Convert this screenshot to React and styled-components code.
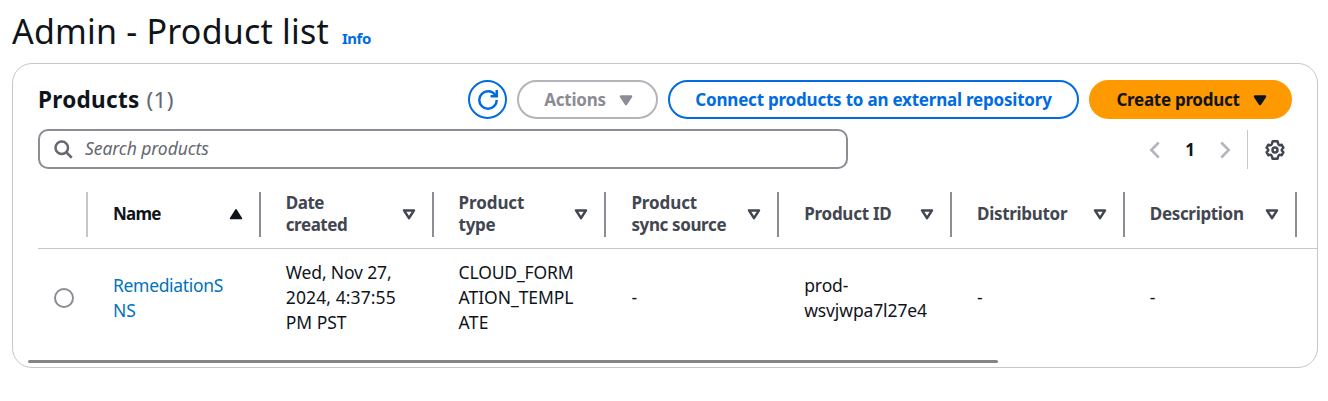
import React from "react";
import styled, { createGlobalStyle } from "styled-components";

const Global = createGlobalStyle`
  *, *::before, *::after { box-sizing: border-box; }
  body {
    margin: 0;
    background: #fff;
    color: #0f141a;
    font-family: "Noto Sans", "Open Sans", sans-serif;
    font-size: 17.5px;
    line-height: 25px;
  }
`;

const Text = styled.span`
  letter-spacing: ${(p) => p.$track || 0}px;
  white-space: nowrap;
`;

const Page = styled.main`
  width: 1328px;
  height: 401px;
  padding: 9px 10px 0 12px;
  overflow: hidden;
`;

const PageHeader = styled.header`
  display: flex;
  align-items: baseline;
  gap: 13px;
  height: 54px;
`;

const PageTitle = styled.h1`
  margin: 0;
  font-size: 34px;
  font-weight: 400;
  line-height: 44px;
`;

const InfoLink = styled.a`
  color: #006ce0;
  font-size: 15px;
  font-weight: 700;
  line-height: 20px;
`;

const Card = styled.section`
  display: flex;
  flex-direction: column;
  height: 305px;
  border: 1px solid #c6c6cd;
  border-radius: 20px;
  overflow: hidden;
`;

const CardHeader = styled.div`
  display: flex;
  align-items: center;
  justify-content: space-between;
  padding: 16px 25px 0;
`;

const CardTitle = styled.h2`
  display: flex;
  gap: 7px;
  margin: 0;
  font-size: 22.5px;
  line-height: 30px;
`;

const Counter = styled(Text)`
  color: #656871;
  font-weight: 400;
`;

const Actions = styled.div`
  display: flex;
  gap: 10px;
`;

const tones = {
  normal: "color: #006ce0; border-color: #006ce0; background: #fff;",
  disabled: "color: #8c8c94; border-color: #b4b4bb; background: #fff;",
  primary: "color: #0f141a; border-color: #ff9900; background: #ff9900;",
};

const Button = styled.button`
  display: flex;
  align-items: center;
  justify-content: center;
  gap: 10px;
  width: ${(p) => p.$width}px;
  height: 39px;
  padding: 0 0 0 ${(p) => (p.$menu ? 5 : 0)}px;
  border: 2px solid;
  border-radius: 20px;
  font: 700 17px/25px "Noto Sans", "Open Sans", sans-serif;
  ${(p) => tones[p.$tone || "normal"]}
`;

const Label = styled(Text)`
  padding-bottom: 1px;
`;

const Icon = styled.svg`
  display: block;
  flex: none;
  width: 20px;
  height: 20px;
  fill: none;
  stroke: currentColor;
  stroke-width: 2;
`;

const Toolbar = styled.div`
  display: flex;
  justify-content: space-between;
  padding: 10px 25px 0;
`;

const SearchBox = styled.label`
  display: flex;
  align-items: center;
  gap: 12px;
  width: 810px;
  height: 40px;
  padding-left: 13px;
  border: 2px solid #8c8c94;
  border-radius: 10px;
  color: #656871;
  font-style: italic;
`;

const Preferences = styled.div`
  display: flex;
  align-items: center;
  height: 41px;
`;

const Pager = styled.nav`
  display: flex;
  align-items: center;
  gap: 15px;
  color: #b4b4bb;
`;

const PageNumber = styled.span`
  width: 20px;
  color: #0f141a;
  font-size: 17px;
  font-weight: 700;
  text-align: center;
`;

const Settings = styled.div`
  display: flex;
  align-items: center;
  height: 39px;
  margin-left: 12px;
  padding: 1px 7px 0 17px;
  border-left: 1px solid #c6c6cd;
  color: #424650;
`;

const Table = styled.div`
  width: 1279px;
  margin-left: 25px;
`;

const Row = styled.div`
  display: grid;
  grid-template-columns: 50px repeat(6, 172.8px) 172px;
  align-items: center;
`;

const HeadRow = styled(Row)`
  height: 79px;
  padding: 10px 0 0;
  border-bottom: 1px solid #c6c6cd;
`;

const BodyRow = styled(Row)`
  height: 97px;
`;

const HeadCell = styled.div`
  display: flex;
  align-items: center;
  justify-content: space-between;
  height: 45px;
  padding: 0 16px 0 25px;
  border-right: 2px solid ${(p) => (p.$light ? "#c6c6cd" : "#8c8c94")};
  color: ${(p) => (p.$active ? "#0f141a" : "#424650")};
  font-size: 17px;
  font-weight: 700;
  line-height: 22px;
`;

const Cell = styled.div`
  display: flex;
  flex-direction: column;
  padding-left: 25px;
  color: ${(p) => (p.$link ? "#0073bb" : "#0f141a")};
`;

const Lines = styled.div`
  display: flex;
  flex-direction: column;
`;

const SortIcon = styled.svg`
  flex: none;
  width: 14px;
  height: 14px;
`;

const RadioCell = styled.div`
  padding-left: 16px;
`;

const Radio = styled.div`
  width: 20px;
  height: 20px;
  border: 2px solid #8c8c94;
  border-radius: 50%;
`;

const ScrollThumb = styled.div`
  width: 970px;
  height: 3px;
  margin: auto 0 4px 15px;
  border-radius: 2px;
  background: #858585;
`;

const columns = [
  { head: [["Name", -0.8]], cell: [["RemediationS", -0.33], ["NS", 0]], link: true, active: true },
  {
    head: [["Date", -0.5], ["created", -0.45]],
    cell: [["Wed, Nov 27,", -0.15], ["2024, 4:37:55", 0.1], ["PM PST", -0.05]],
  },
  {
    head: [["Product", -0.1], ["type", -0.3]],
    cell: [["CLOUD_FORM", -0.15], ["ATION_TEMPL", -0.05], ["ATE", 0.2]],
  },
  { head: [["Product", -0.1], ["sync source", -0.37]], cell: [["-", 0]] },
  { head: [["Product ID", -0.25]], cell: [["prod-", -0.1], ["wsvjwpa7l27e4", -0.12]] },
  { head: [["Distributor", -0.3]], cell: [["-", 0]] },
  { head: [["Description", -0.33]], cell: [["-", 0]] },
];

const renderLines = (lines) =>
  lines.map(([text, track]) => (
    <Text key={text} $track={track}>{text}</Text>
  ));

const Caret = () => (
  <Icon viewBox="0 0 16 16" aria-hidden="true">
    <path d="M4 5.200h8l-4 6z" fill="currentColor" strokeLinejoin="round" />
  </Icon>
);

const Sort = ({ active }) => (
  <SortIcon viewBox="0 0 14 14" aria-hidden="true">
    {active ? (
      <path d="M7 3l5.300 8.400H1.700z" fill="#0f141a" stroke="#0f141a" strokeWidth="1.8" strokeLinejoin="round" />
    ) : (
      <path d="M2 3.400h10L7 11.200z" fill="none" stroke="#424650" strokeWidth="2.5" strokeLinejoin="round" />
    )}
  </SortIcon>
);

export default function App() {
  return (
    <>
      <Global />
      <Page>
        <PageHeader>
          <PageTitle><Text $track={0.21}>Admin - Product list</Text></PageTitle>
          <InfoLink><Text $track={-0.5}>Info</Text></InfoLink>
        </PageHeader>
        <Card>
          <CardHeader>
            <CardTitle>
              <Text $track={0.3}>Products</Text>
              <Counter $track={0.3}>(1)</Counter>
            </CardTitle>
            <Actions>
              <Button $width={39} aria-label="Refresh">
                <Icon viewBox="0 0 16 16">
                  <path d="M10 5h5V0" />
                  <path d="M15 8a7 7 0 1 1-7-7c2.800 0 5.100 1.400 6.300 4" />
                </Icon>
              </Button>
              <Button $width={141} $tone="disabled" $menu><Label $track={-0.25}>Actions</Label><Caret /></Button>
              <Button $width={411}><Label $track={-0.21}>Connect products to an external repository</Label></Button>
              <Button $width={203} $tone="primary" $menu><Label $track={-0.28}>Create product</Label><Caret /></Button>
            </Actions>
          </CardHeader>
          <Toolbar>
            <SearchBox>
              <Icon viewBox="0 0 16 16">
                <circle cx="7" cy="7" r="5" />
                <path d="M10.800 10.800L15 15" />
              </Icon>
              <Label $track={-0.07}>Search products</Label>
            </SearchBox>
            <Preferences>
              <Pager>
                <Icon viewBox="0 0 16 16"><path d="M11 2L5 8l6 6" /></Icon>
                <PageNumber>1</PageNumber>
                <Icon viewBox="0 0 16 16"><path d="M5 2l6 6-6 6" /></Icon>
              </Pager>
              <Settings>
                <Icon viewBox="0 0 16 16">
                  <path
                    strokeLinejoin="round"
                    d="M13.300 8c0-.6.5-1 1.400-1.700l-1.300-2.500c-1.100.4-1.700.5-2.200.2S10.500 2.400 10 1H6.200C5.700 2.400 5.500 3.700 4.900 4s-1.200.2-2.300-.2L1.300 6.300C2.200 7 2.700 7.400 2.700 8s-.5 1-1.400 1.700l1.300 2.500c1.100-.4 1.800-.5 2.300-.2s.7 1.600 1.200 3H10c.5-1.400.7-2.700 1.200-3s1.100-.2 2.200.2l1.300-2.500c-.9-.7-1.400-1.100-1.400-1.700z"
                  />
                  <circle cx="8" cy="8" r="2" />
                </Icon>
              </Settings>
            </Preferences>
          </Toolbar>
          <Table>
            <HeadRow>
              <HeadCell $light />
              {columns.map((c, i) => (
                <HeadCell key={i} $active={c.active}>
                  <Lines>{renderLines(c.head)}</Lines>
                  <Sort active={c.active} />
                </HeadCell>
              ))}
            </HeadRow>
            <BodyRow>
              <RadioCell><Radio /></RadioCell>
              {columns.map((c, i) => (
                <Cell key={i} $link={c.link}>{renderLines(c.cell)}</Cell>
              ))}
            </BodyRow>
          </Table>
          <ScrollThumb />
        </Card>
      </Page>
    </>
  );
}
